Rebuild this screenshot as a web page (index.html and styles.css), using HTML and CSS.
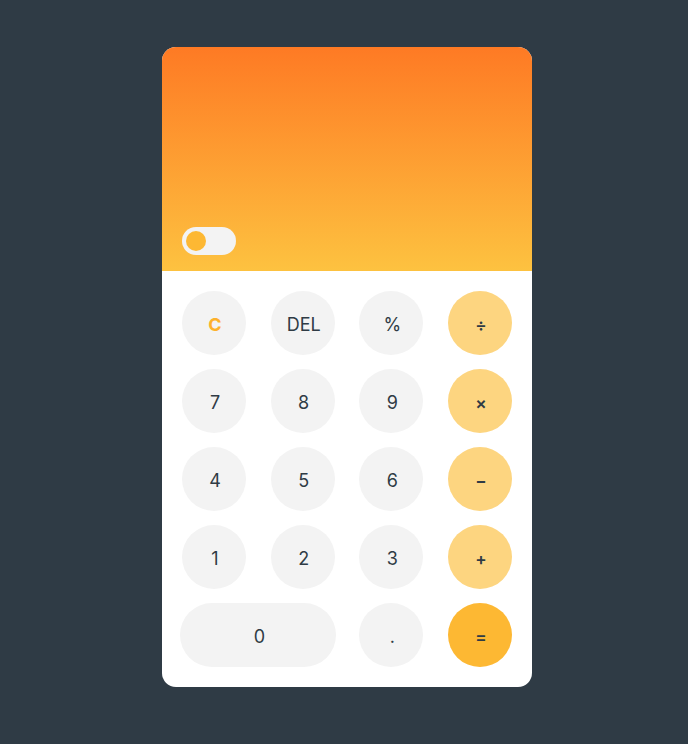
FILE: index.html
```html
<!DOCTYPE html>
<html>
<head>
<meta charset="utf-8">
<link rel="stylesheet" href="styles.css">
</head>
<body>
<div class="calc">
  <div class="display">
    <div class="toggle"><span class="knob"></span></div>
  </div>
  <div class="keys">
    <button class="key clear">C</button>
    <button class="key">DEL</button>
    <button class="key">%</button>
    <button class="key op">÷</button>
    <button class="key">7</button>
    <button class="key">8</button>
    <button class="key">9</button>
    <button class="key op">×</button>
    <button class="key">4</button>
    <button class="key">5</button>
    <button class="key">6</button>
    <button class="key op">−</button>
    <button class="key">1</button>
    <button class="key">2</button>
    <button class="key">3</button>
    <button class="key op">+</button>
    <button class="key zero">0</button>
    <button class="key">.</button>
    <button class="key eq op">=</button>
  </div>
</div>
</body>
</html>
```
FILE: styles.css
```css
html, body {
  margin: 0;
  padding: 0;
  background: #2f3b45;
}
body {
  width: 688px;
  height: 744px;
  padding-top: 47px;
  box-sizing: border-box;
  font-family: "Inter", "Lato", sans-serif;
}
.calc {
  width: 370px;
  height: 640px;
  margin-left: 162px;
  background: #ffffff;
  border-radius: 14px;
  overflow: hidden;
}
.display {
  height: 224px;
  background: linear-gradient(to bottom, #fe7a24 0%, #fdc240 100%);
  display: flex;
  align-items: flex-end;
  padding: 0 20px 16px;
  box-sizing: border-box;
}
.toggle {
  width: 54px;
  height: 28px;
  border-radius: 14px;
  background: #f3f3f3;
  display: flex;
  align-items: center;
  padding-left: 4px;
  box-sizing: border-box;
}
.knob {
  width: 20px;
  height: 20px;
  border-radius: 50%;
  background: #fdb833;
}
.keys {
  display: grid;
  grid-template-columns: repeat(4, 64px);
  grid-auto-rows: 64px;
  justify-content: space-between;
  row-gap: 14px;
  padding: 20px;
}
.key {
  width: 64px;
  height: 64px;
  border: none;
  border-radius: 32px;
  background: #f3f3f3;
  color: #2f3b45;
  font-family: "Inter", "Lato", sans-serif;
  font-size: 18px;
  font-weight: 400;
  padding: 3px 0 0 2px;
  justify-self: center;
}
.clear {
  color: #fdb12c;
  font-weight: 700;
}
.op {
  background: #fdd580;
  font-weight: 600;
  font-size: 17px;
}
.eq {
  background: #fdb833;
}
.zero {
  grid-column: span 2;
  width: 156px;
}
```
